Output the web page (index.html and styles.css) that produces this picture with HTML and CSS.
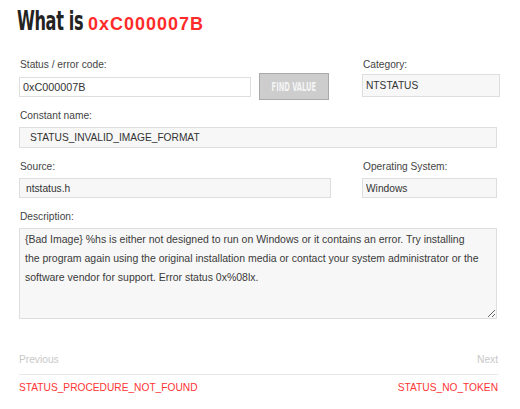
FILE: index.html
```html
<!DOCTYPE html>
<html lang="en">
<head>
<meta charset="utf-8">
<title>What is 0xC000007B</title>
<link rel="stylesheet" href="styles.css">
</head>
<body>
<div class="page">
  <h1 class="title"><span class="what">What is</span><span class="code">0xC000007B</span></h1>

  <div class="grid">
    <div class="field">
      <label class="label">Status / error code:</label>
      <div class="search">
        <input class="input input-white" type="text" value="0xC000007B">
        <button class="btn"><span class="btn-text">FIND VALUE</span></button>
      </div>
    </div>
    <div class="field">
      <label class="label">Category:</label>
      <input class="input input-cat" type="text" value="NTSTATUS" readonly>
    </div>

    <div class="field span2">
      <label class="label">Constant name:</label>
      <input class="input input-const" type="text" value="STATUS_INVALID_IMAGE_FORMAT" readonly>
    </div>

    <div class="field">
      <label class="label">Source:</label>
      <input class="input input-src" type="text" value="ntstatus.h" readonly>
    </div>
    <div class="field">
      <label class="label">Operating System:</label>
      <input class="input input-os" type="text" value="Windows" readonly>
    </div>

    <div class="field span2">
      <label class="label">Description:</label>
      <textarea class="input desc" readonly>{Bad Image} %hs is either not designed to run on Windows or it contains an error. Try installing
the program again using the original installation media or contact your system administrator or the
software vendor for support. Error status 0x%08lx.</textarea>
    </div>
  </div>

  <nav class="pager">
    <div class="pager-head">
      <span>Previous</span>
      <span>Next</span>
    </div>
    <div class="pager-links">
      <a href="#" class="link">STATUS_PROCEDURE_NOT_FOUND</a>
      <a href="#" class="link">STATUS_NO_TOKEN</a>
    </div>
  </nav>
</div>
</body>
</html>
```

FILE: styles.css
```css
* { box-sizing: border-box; }

body {
  margin: 0;
  background: #fff;
  font-family: "Liberation Sans", Arial, sans-serif;
  color: #444;
}

.page {
  padding: 0 23px 0 19px;
}

.title {
  margin: 0;
  padding-top: 6px;
  height: 40px;
  line-height: 30px;
  font-weight: bold;
  white-space: nowrap;
  display: flex;
  align-items: baseline;
}

.what {
  display: inline-block;
  width: 71px;
  font-family: "DejaVu Sans Condensed", "DejaVu Sans", sans-serif;
  font-size: 26px;
  color: #232323;
  letter-spacing: -0.5px;
  margin-left: -2px;
  transform: scaleX(0.69);
  transform-origin: left center;
}

.code {
  font-family: "Liberation Sans", Arial, sans-serif;
  font-size: 18px;
  letter-spacing: 1px;
  color: #ff2b2b;
}

.grid {
  display: grid;
  grid-template-columns: 312px 138px;
  column-gap: 31px;
  row-gap: 12px;
  margin-top: 18px;
}

.span2 { grid-column: 1 / 3; width: 478px; }

.field {
  display: flex;
  flex-direction: column;
}

.label {
  font-size: 10.2px;
  line-height: 14px;
  color: #444;
  margin-bottom: 4px;
  padding-left: 1px;
}

.search {
  display: flex;
  align-items: center;
  gap: 8px;
  height: 21px;
}

.input {
  font-family: "Liberation Sans", Arial, sans-serif;
  font-size: 10.2px;
  color: #333;
  border: 1px solid #dedede;
  background: #f7f7f7;
  height: 21px;
  padding: 0 3px;
  margin: 0;
  outline: none;
}

.input-white {
  background: #fff;
  width: 232px;
  margin-top: 1px;
  height: 20px;
  font-size: 10.8px;
}

.input-cat {
  width: 138px;
  margin-top: -2px;
  height: 23px;
}

.input-const { padding: 0 10px; }
.input-src { padding: 0 6px; height: 20px; }
.input-os { width: 135px; height: 20px; }

.btn {
  width: 70px;
  height: 27px;
  padding: 0;
  background: #cdcdcd;
  border: 1px solid #a9a9a9;
  display: flex;
  align-items: center;
  justify-content: center;
  flex-shrink: 0;
  overflow: hidden;
}

.btn-text {
  display: inline-block;
  font-family: "DejaVu Sans Condensed", "DejaVu Sans", sans-serif;
  font-weight: bold;
  font-size: 12px;
  color: #f4f4f4;
  transform: scaleX(0.62);
  white-space: nowrap;
}

.desc {
  width: 478px;
  height: 91px;
  padding: 1px 4px 2px 5px;
  font-size: 10.5px;
  line-height: 19px;
  color: #3a3a3a;
  resize: vertical;
  display: block;
  white-space: pre-wrap;
}

.pager {
  width: 479px;
  margin-top: 34px;
  font-size: 10.2px;
}

.pager-head {
  display: flex;
  justify-content: space-between;
  color: #c8c8c8;
  line-height: 14px;
  padding-bottom: 7px;
  border-bottom: 1px solid #e8e8e8;
}

.pager-links {
  display: flex;
  justify-content: space-between;
  line-height: 14px;
  padding-top: 6px;
}

.link {
  color: #ff3434;
  text-decoration: none;
}
```
